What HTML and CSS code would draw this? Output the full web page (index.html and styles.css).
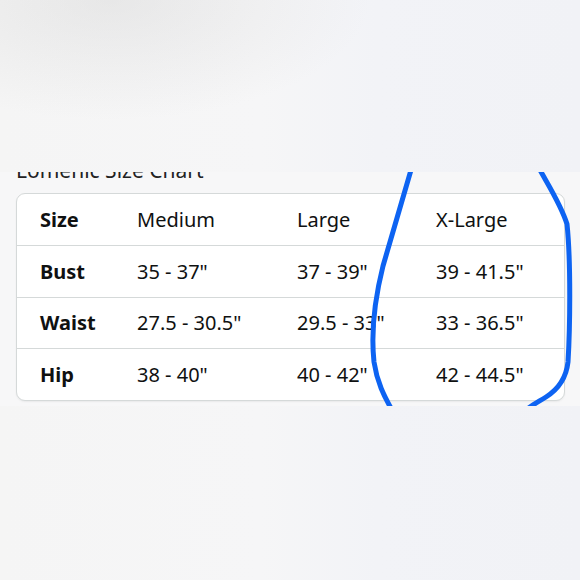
FILE: index.html
```html
<!DOCTYPE html>
<html lang="en">
<head>
<meta charset="utf-8">
<title>Lomenic Size Chart</title>
<link rel="stylesheet" href="styles.css">
</head>
<body>
<div class="page">
  <div class="top-space"></div>
  <section class="shot">
    <h2 class="chart-title">Lomenic Size Chart</h2>
    <div class="card">
      <div class="row head">
        <div class="cell label">Size</div>
        <div class="cell">Medium</div>
        <div class="cell">Large</div>
        <div class="cell">X-Large</div>
      </div>
      <div class="row">
        <div class="cell label">Bust</div>
        <div class="cell">35 - 37"</div>
        <div class="cell">37 - 39"</div>
        <div class="cell">39 - 41.5"</div>
      </div>
      <div class="row">
        <div class="cell label">Waist</div>
        <div class="cell">27.5 - 30.5"</div>
        <div class="cell">29.5 - 33"</div>
        <div class="cell">33 - 36.5"</div>
      </div>
      <div class="row">
        <div class="cell label">Hip</div>
        <div class="cell">38 - 40"</div>
        <div class="cell">40 - 42"</div>
        <div class="cell">42 - 44.5"</div>
      </div>
    </div>
    <svg class="marker" width="580" height="234" viewBox="0 172 580 234" xmlns="http://www.w3.org/2000/svg">
      <path d="M411,170 C403,198 391,238 383,266 C375,298 371,334 374,362 C377,382 384,396 392,410" />
      <path d="M540,170 C550,188 561,205 567,224 C571,262 570,330 568,362 C566,380 557,390 546,397 C538,402 532,405 526,410" />
    </svg>
  </section>
</div>
</body>
</html>
```
FILE: styles.css
```css
html, body {
  margin: 0;
  padding: 0;
}
body {
  width: 580px;
  height: 580px;
  overflow: hidden;
  background:
    radial-gradient(ellipse 260px 120px at 110px 0px, rgba(205,205,205,0.35), rgba(205,205,205,0) 100%),
    linear-gradient(90deg, #f5f5f5 0%, #f6f6f7 45%, #f2f3f7 65%, #f1f2f6 100%);
  font-family: "Noto Sans", "Open Sans", sans-serif;
  color: #0f1111;
}
.page {
  display: flex;
  flex-direction: column;
}
.top-space {
  height: 172px;
}
.shot {
  position: relative;
  height: 234px;
  overflow: hidden;
  background: #f7f7f8;
}
.chart-title {
  margin: -15px 0 0 16px;
  font-size: 21px;
  line-height: 26px;
  font-weight: 400;
  color: #222;
}
.card {
  margin: 10px 0 0 16px;
  width: 547px;
  background: #fff;
  border: 1px solid #d5d9d9;
  border-radius: 9px;
  box-shadow: 0 1px 2px rgba(0,0,0,0.06);
  display: flex;
  flex-direction: column;
}
.row {
  display: grid;
  grid-template-columns: 97px 160px 139px 1fr;
  padding-left: 23px;
  height: 50.5px;
  align-items: center;
  border-top: 1px solid #d5d9d9;
  font-size: 20px;
}
.row.head {
  border-top: none;
  height: 51px;
}
.label {
  font-weight: 700;
}
.marker {
  position: absolute;
  left: 0;
  top: 0;
}
.marker path {
  fill: none;
  stroke: #0d63f2;
  stroke-width: 5;
  stroke-linecap: round;
  stroke-linejoin: round;
}
```
